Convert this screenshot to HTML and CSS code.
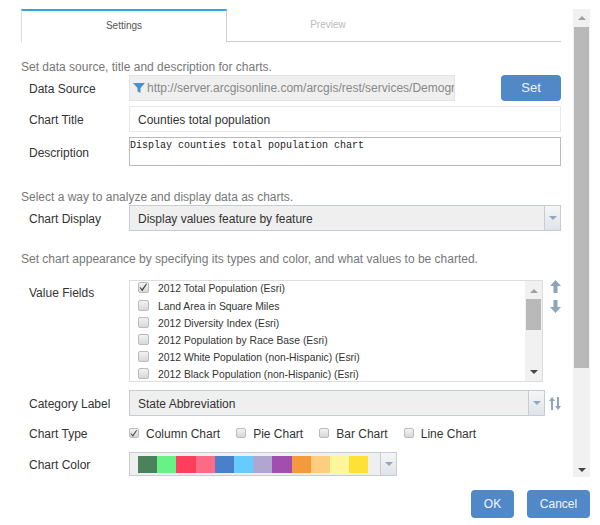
FILE: index.html
```html
<!DOCTYPE html>
<html lang="en">
<head>
<meta charset="utf-8">
<title>Chart Settings</title>
<link rel="stylesheet" href="styles.css">
</head>
<body>
<div class="app">
  <div class="main">
    <div class="content">
      <div class="tabs">
        <div class="tab active">Settings</div>
        <div class="tab">Preview</div>
      </div>

      <div class="heading h1">Set data source, title and description for charts.</div>
      <div class="row">
        <div class="label">Data Source</div>
        <div class="box source">
          <svg class="filter" viewBox="0 0 12 10" width="12" height="10"><path d="M0 0H12L7.5 5V10L4.5 8.5V5Z"/></svg>
          <span class="clip">http://server.arcgisonline.com/arcgis/rest/services/Demographics</span>
        </div>
        <div class="btn set">Set</div>
      </div>
      <div class="row gap">
        <div class="label">Chart Title</div>
        <div class="box plain pad">Counties total population</div>
      </div>
      <div class="row gap tall">
        <div class="label desc-label">Description</div>
        <div class="box area">Display counties total population chart</div>
      </div>

      <div class="heading h2">Select a way to analyze and display data as charts.</div>
      <div class="row">
        <div class="label">Chart Display</div>
        <div class="box combo">
          <span class="combo-text">Display values feature by feature</span>
          <span class="drop"><i class="caret"></i></span>
        </div>
      </div>

      <div class="heading h3">Set chart appearance by specifying its types and color, and what values to be charted.</div>
      <div class="row list-row">
        <div class="label list-label">Value Fields</div>
        <div class="list">
          <div class="items">
            <div class="item"><span class="check on"><svg viewBox="0 0 12 12" width="12" height="12"><path d="M2.5 6 5 8.5 10 1.5 10.5 3 5.2 11 2 7Z"/></svg></span>2012 Total Population (Esri)</div>
            <div class="item"><span class="check"></span>Land Area in Square Miles</div>
            <div class="item"><span class="check"></span>2012 Diversity Index (Esri)</div>
            <div class="item"><span class="check"></span>2012 Population by Race Base (Esri)</div>
            <div class="item"><span class="check"></span>2012 White Population (non-Hispanic) (Esri)</div>
            <div class="item"><span class="check"></span>2012 Black Population (non-Hispanic) (Esri)</div>
          </div>
          <div class="sb small">
            <i class="arrow up"></i>
            <div class="thumb"></div>
            <i class="arrow down"></i>
          </div>
        </div>
        <div class="order">
          <svg viewBox="0 0 11 13" width="11" height="13"><path d="M5.5 0 11 6H7.5V13H3.5V6H0Z"/></svg>
          <svg viewBox="0 0 11 13" width="11" height="13"><path d="M5.5 13 11 7H7.5V0H3.5V7H0Z"/></svg>
        </div>
      </div>
      <div class="row cat">
        <div class="label">Category Label</div>
        <div class="box combo cat-combo">
          <span class="combo-text">State Abbreviation</span>
          <span class="drop"><i class="caret"></i></span>
        </div>
        <svg class="sort" viewBox="0 0 12 13" width="12" height="13"><path d="M3 0 6 4H4V13H2V4H0ZM9 13 6 9H8V0H10V9H12Z"/></svg>
      </div>
      <div class="row types">
        <div class="label flat">Chart Type</div>
        <div class="type"><span class="check on"><svg viewBox="0 0 12 12" width="12" height="12"><path d="M2.5 6 5 8.5 10 1.5 10.5 3 5.2 11 2 7Z"/></svg></span>Column Chart</div>
        <div class="type"><span class="check"></span>Pie Chart</div>
        <div class="type"><span class="check"></span>Bar Chart</div>
        <div class="type"><span class="check"></span>Line Chart</div>
      </div>
      <div class="row colors">
        <div class="label">Chart Color</div>
        <div class="box combo color-combo">
          <span class="swatches">
            <i class="c1"></i><i class="c2"></i><i class="c3"></i><i class="c4"></i><i class="c5"></i><i class="c6"></i><i class="c7"></i><i class="c8"></i><i class="c9"></i><i class="c10"></i><i class="c11"></i><i class="c12"></i>
          </span>
          <span class="drop"><i class="caret"></i></span>
        </div>
      </div>
    </div>
    <div class="sb page">
      <i class="arrow up"></i>
      <div class="thumb"></div>
      <i class="arrow down"></i>
    </div>
  </div>
  <div class="footer">
    <div class="btn ok">OK</div>
    <div class="btn cancel">Cancel</div>
  </div>
</div>
</body>
</html>
```
FILE: styles.css
```css
* { box-sizing: border-box; }
html, body { margin: 0; padding: 0; background: #fff; }
body {
  width: 600px;
  height: 525px;
  overflow: hidden;
  font: 12px/16px "Liberation Sans", Arial, sans-serif;
  color: #333;
}
.app { padding: 9px 10px 0 0; }
.main { display: flex; height: 468px; }
.content { flex: 1; padding: 0 12px 0 21px; min-width: 0; }

.tabs { display: flex; height: 33px; border-bottom: 1px solid #ccc; }
.tab { width: 202px; height: 32px; line-height: 32px; text-align: center; font-size: 10px; color: #bbb; font-weight: normal; }
.tab.active {
  width: 206px;
  height: 33px;
  line-height: 29px;
  color: #555;
  background: #fff;
  border-top: 2px solid #2da5e8;
  border-left: 1px solid #ddd;
  border-right: 1px solid #ccc;
}

.heading { color: #777; height: 16px; padding-top: 1px; }
.h1 { margin-top: 16px; margin-bottom: 1px; }
.h2 { margin-top: 22px; margin-bottom: 1px; }
.h3 { margin-top: 19px; margin-bottom: 14px; }

.row { display: flex; align-items: center; height: 26px; }
.gap { margin-top: 5px; }
.tall { height: 29px; }
.label { width: 100px; margin-left: 8px; padding-top: 1px; flex: none; color: #333; }
.label.flat { padding-top: 0; }
.label.desc-label { padding-top: 3px; }

.box { height: 100%; flex: none; border: 1px solid #ddd; }
.source {
  width: 326px;
  display: flex;
  align-items: center;
  gap: 2px;
  padding-left: 3px;
  background: #efefef;
  color: #888;
  border-color: #e4e4e4;
  overflow: hidden;
}
.filter { flex: none; fill: #4a90d0; }
.clip { flex: 1; min-width: 0; overflow: hidden; white-space: nowrap; }
.plain { width: 432px; border-color: #e8e8e8; line-height: 24px; }
.pad { padding: 1px 0 0 8px; }
.area {
  width: 432px;
  padding-top: 2px;
  border-color: #bbb;
  font: 10px/12px "Liberation Mono", "Courier New", monospace;
  color: #222;
}

.combo {
  width: 432px;
  display: flex;
  justify-content: space-between;
  background: #efefef;
  border-color: #c5ccd6;
  line-height: 24px;
}
.combo-text { padding: 1px 0 0 8px; }
.drop {
  width: 16px;
  display: flex;
  align-items: center;
  justify-content: center;
  background: linear-gradient(#f6f6f6, #dfe3e8);
  border-left: 1px solid #c5ccd6;
}
.caret {
  width: 0;
  height: 0;
  border-left: 4px solid transparent;
  border-right: 4px solid transparent;
  border-top: 4px solid #8fa6c4;
}

.btn {
  display: flex;
  align-items: center;
  justify-content: center;
  color: #f2f6fb;
  background: #5088c8;
  border-radius: 4px;
  flex: none;
}
.set { width: 60px; height: 26px; margin-left: 46px; font-size: 13px; }

.list-row { height: 102px; margin-top: 0; align-items: flex-start; }
.list-label { margin-top: 4px; }
.list {
  width: 414px;
  height: 102px;
  flex: none;
  display: flex;
  border: 1px solid #ddd;
  overflow: hidden;
}
.items { flex: 1; margin-top: -0.2px; font-size: 10.35px; color: #333; overflow: hidden; }
.item { display: flex; align-items: center; height: 17.2px; padding-left: 8px; white-space: nowrap; }
.check {
  width: 11px;
  height: 11px;
  flex: none;
  margin-right: 9px;
  margin-top: -3px;
  border: 1px solid #bbb;
  border-radius: 2px;
  background: linear-gradient(#f2f2f2, #d8d8d8);
  display: flex;
}
.check svg { margin: -2px 0 0 -1px; fill: #444; }

.sb { display: flex; flex-direction: column; align-items: center; background: #f1f1f1; flex: none; }
.sb .thumb { background: #b9b9b9; width: 15px; }
.arrow { width: 0; height: 0; border-left: 4px solid transparent; border-right: 4px solid transparent; }
.arrow.up { border-bottom: 4px solid #a0a0a0; }
.arrow.down { border-top: 4px solid #444; }
.small { width: 17px; padding-top: 8px; }
.small .thumb { height: 31px; margin-top: 6px; }
.small .arrow.down { margin-top: 40px; }
.page { width: 17px; height: 468px; padding-top: 7px; }
.page .thumb { width: 15px; height: 341px; margin-top: 7px; }
.page .arrow.down { margin-top: 100px; }

.order { display: flex; flex-direction: column; gap: 7px; margin-left: 7px; fill: #8ea3bc; }
.order svg { display: block; }

.cat { margin-top: 8px; }
.cat-combo { width: 416px; }
.sort { margin-left: 4px; fill: #8ea3bc; }

.types { margin-top: 8px; height: 20px; }
.type { display: flex; align-items: center; margin-right: 16.1px; font-size: 12px; }
.type .check { width: 10px; height: 10px; margin-right: 7px; margin-top: -3px; }
.colors { margin-top: 8px; height: 24px; }
.color-combo { width: 268px; align-items: stretch; }
.swatches { display: flex; align-items: center; padding-left: 8px; }
.swatches i { display: block; width: 19.2px; height: 17px; }
.c1 { background: #4a8259; }
.c2 { background: #66f285; }
.c3 { background: #ff3d5d; }
.c4 { background: #ff6b85; }
.c5 { background: #4a7fc9; }
.c6 { background: #66ccff; }
.c7 { background: #b0a6cf; }
.c8 { background: #a04fb0; }
.c9 { background: #f59a3c; }
.c10 { background: #fdce7d; }
.c11 { background: #fff59a; }
.c12 { background: #ffe135; }

.footer { display: flex; justify-content: flex-end; gap: 13px; margin-top: 13px; }
.ok { width: 43px; height: 28px; }
.cancel { width: 63px; height: 28px; }
```
